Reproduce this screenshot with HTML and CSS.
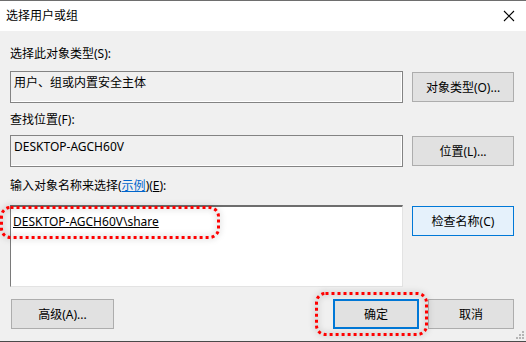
FILE: index.html
```html
<!DOCTYPE html>
<html>
<head>
    <title>选择用户或组</title>
    <link rel="stylesheet" href="styles.css">
</head>
<body>
    <div class="window">
        <div class="titlebar">
            <span class="title">选择用户或组</span>
            <svg class="close" width="12" height="12" viewBox="0 0 12 12">
                <path d="M1 1 L11 11 M11 1 L1 11" stroke="#000" stroke-width="1.1" fill="none"/>
            </svg>
        </div>

        <div class="content">
            <div class="label label-first">选择此对象类型(S):</div>
            <div class="row">
                <div class="field">用户、组或内置安全主体</div>
                <button class="btn">对象类型(O)...</button>
            </div>

            <div class="label label-second">查找位置(F):</div>
            <div class="row row-second">
                <div class="field">DESKTOP-AGCH60V</div>
                <button class="btn">位置(L)...</button>
            </div>

            <div class="label label-third">输入对象名称来选择(<a class="link">示例</a>)(<u>E</u>):</div>
            <div class="row row-third">
                <div class="names"><u>DESKTOP-AGCH60V\share</u></div>
                <button class="btn btn-hot">检查名称(C)</button>
            </div>

            <div class="footer">
                <button class="btn btn-adv">高级(A)...</button>
                <div class="footer-right">
                    <button class="btn btn-small btn-default">确定</button>
                    <button class="btn btn-small">取消</button>
                </div>
            </div>
        </div>

        <!-- annotation marks -->
        <svg class="mark mark-name" width="222" height="34" viewBox="0 0 222 34">
            <rect x="1.5" y="1.5" width="217" height="30" rx="9" fill="none" stroke="#ff0000" stroke-width="3" stroke-dasharray="3 3"/>
        </svg>
        <svg class="mark mark-ok" width="116" height="46" viewBox="0 0 116 46">
            <rect x="1.5" y="1.5" width="110" height="41" rx="9" fill="none" stroke="#ff0000" stroke-width="3" stroke-dasharray="3 3"/>
        </svg>

        <svg class="grip" width="10" height="10" viewBox="0 0 10 10">
            <rect x="7" y="1" width="2" height="2" fill="#b5b5b5"/>
            <rect x="4" y="4" width="2" height="2" fill="#b5b5b5"/>
            <rect x="7" y="4" width="2" height="2" fill="#b5b5b5"/>
            <rect x="1" y="7" width="2" height="2" fill="#b5b5b5"/>
            <rect x="4" y="7" width="2" height="2" fill="#b5b5b5"/>
            <rect x="7" y="7" width="2" height="2" fill="#b5b5b5"/>
        </svg>
    </div>
</body>
</html>
```

FILE: styles.css
```css
body {
    margin: 0;
    font-family: "Noto Sans", "Noto Sans CJK SC", sans-serif;
    font-size: 12px;
    color: #000;
    background-color: #f0f0f0;
}

.window {
    position: relative;
    width: 526px;
    height: 342px;
    box-sizing: border-box;
    border-top: 1px solid #6e6e6e;
    border-bottom: 1px solid #4a4a4a;
    background-color: #f0f0f0;
    overflow: hidden;
}

.titlebar {
    height: 30px;
    background-color: #fff;
    display: flex;
    align-items: center;
    justify-content: space-between;
    padding: 0 11px 0 6px;
}

.title {
    font-size: 12px;
    line-height: 16px;
}

.content {
    padding: 0 12px 0 10px;
}

.label {
    line-height: 16px;
    height: 16px;
    white-space: nowrap;
}

.label-first {
    margin-top: 15px;
}

.label-second {
    margin-top: 9px;
}

.label-third {
    margin-top: 11px;
}

.link {
    color: #0066cc;
    text-decoration: underline;
}

.row {
    display: flex;
    gap: 9px;
    align-items: flex-start;
    margin-top: 9px;
}

.row-second {
    margin-top: 7px;
}

.row-third {
    margin-top: 11px;
}

.field {
    width: 393px;
    height: 32px;
    box-sizing: border-box;
    border: 1px solid #838383;
    box-shadow: inset -1px -1px 0 #fff;
    padding: 3px 3px;
    line-height: 16px;
}

.names {
    width: 393px;
    height: 82px;
    box-sizing: border-box;
    background-color: #fff;
    border-top: 2px solid #6d6d6d;
    border-left: 1px solid #7a7a7a;
    border-right: 1px solid #e3e3e3;
    border-bottom: 1px solid #e3e3e3;
    padding: 7px 2px;
    line-height: 16px;
}

.btn {
    width: 102px;
    height: 30px;
    margin-top: 1px;
    box-sizing: border-box;
    border: 1px solid #adadad;
    background-color: #e1e1e1;
    font-family: inherit;
    font-size: 12px;
    color: #000;
    padding: 0;
}

.btn-hot {
    border-color: #0078d7;
    background-color: #e5f1fb;
}

.footer {
    display: flex;
    justify-content: space-between;
    margin-top: 11px;
}

.btn-adv {
    width: 103px;
    margin-left: 1px;
}

.footer-right {
    display: flex;
    gap: 9px;
}

.btn-small {
    width: 86px;
}

.btn-default {
    border: 2px solid #0078d7;
}

.mark {
    position: absolute;
    filter: drop-shadow(0 0 3px rgba(0, 0, 0, 0.35));
}

.mark-name {
    left: 0;
    top: 205px;
}

.mark-ok {
    left: 315px;
    top: 291px;
}

.grip {
    position: absolute;
    right: 1px;
    bottom: 1px;
}
```
